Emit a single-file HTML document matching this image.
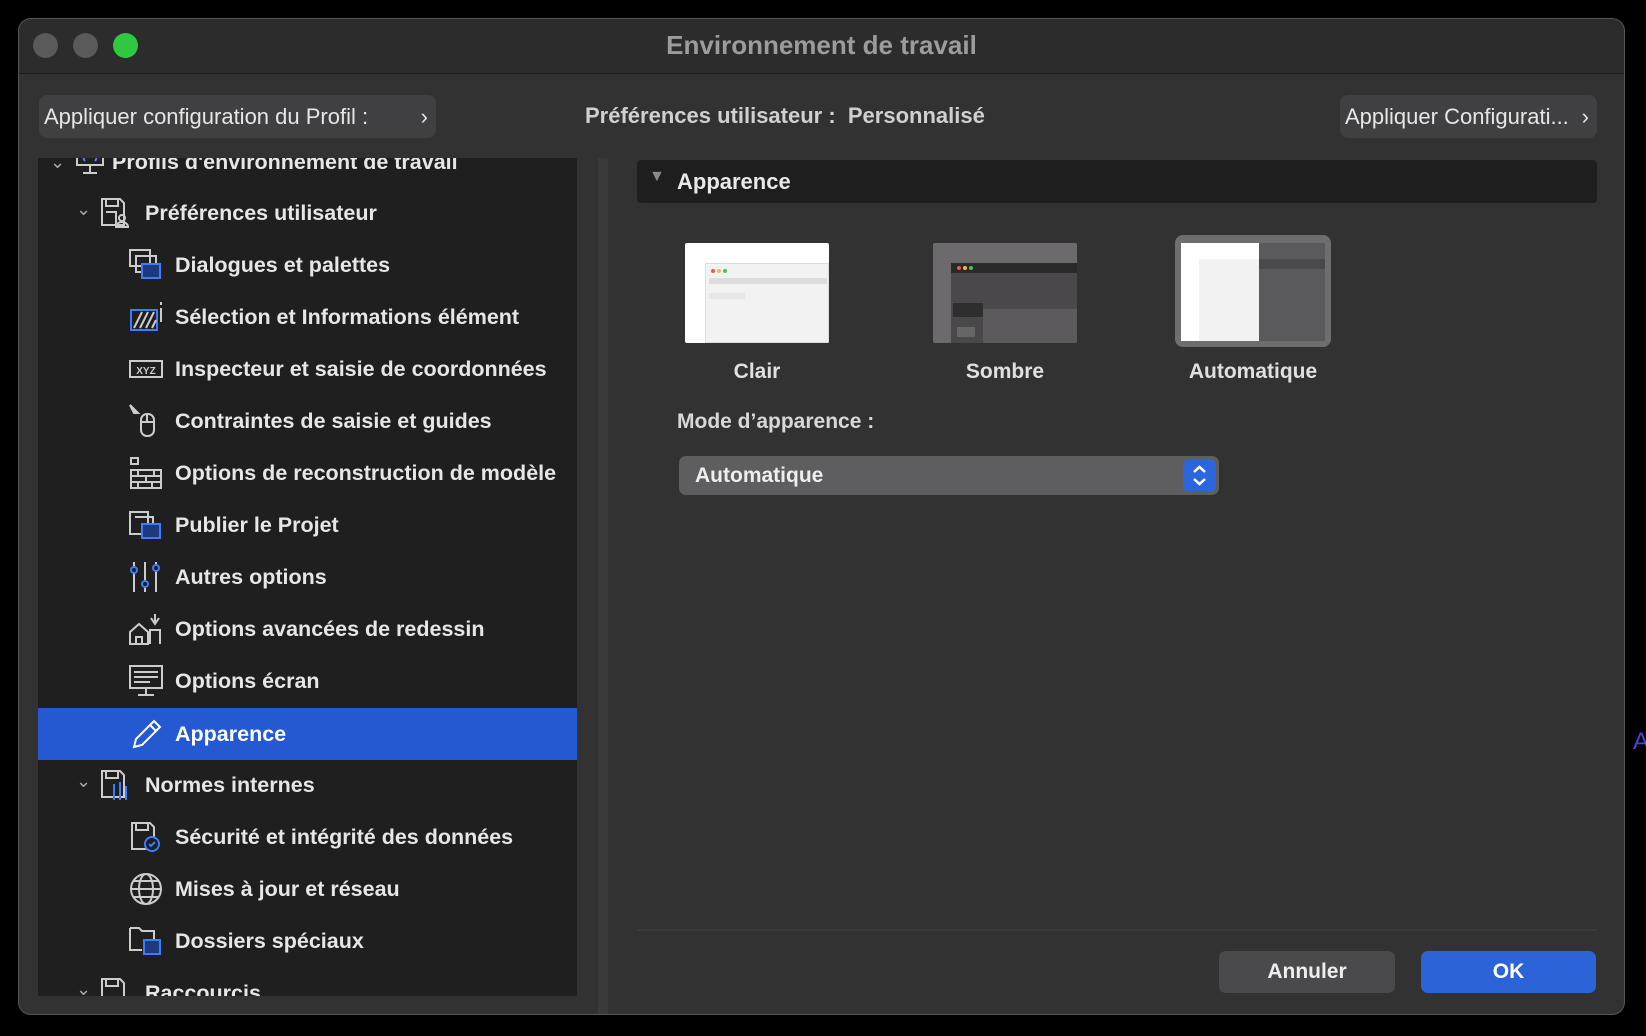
<!DOCTYPE html>
<html><head><meta charset="utf-8"><style>
*{margin:0;padding:0;box-sizing:border-box}
body{width:1646px;height:1036px;background:#000;overflow:hidden;font-family:"Liberation Sans",sans-serif;position:relative;color:#e4e4e4}
.win{position:absolute;left:18px;top:18px;width:1607px;height:997px;background:#323232;border-radius:13px;border:1px solid #555;overflow:hidden}
.tb{position:absolute;left:0;top:0;right:0;height:55px;background:#2c2c2c;border-bottom:1px solid #1a1a1a}
.l{position:absolute;top:14px;width:25px;height:25px;border-radius:50%;background:#5a5a5a}
.title{position:absolute;top:11px;left:0;right:0;text-align:center;font-size:26px;font-weight:bold;color:#9c9c9c}
.btn{position:absolute;background:#404042;border-radius:8px;font-size:22px;color:#e6e6e6;line-height:43px;padding-left:5px}
.abs{position:absolute}
.side{position:absolute;left:19px;top:139px;width:539px;height:838px;background:#1f1f1f;overflow:hidden}
.row{position:absolute;left:0;width:539px;height:52px;font-size:21.5px;font-weight:bold;line-height:52px;color:#e6e6e6;white-space:nowrap}
.row svg{position:absolute;top:9px}
.row .t{position:absolute}
.chev{position:absolute;font-size:18px;color:#aaa;font-weight:normal}
.sel{background:#2459d2}
.split{position:absolute;left:579px;top:139px;width:10px;height:858px;background:#3a3a3a}
.thumb{position:absolute;border-radius:2px;overflow:hidden}
.lab{position:absolute;font-size:21px;font-weight:bold;color:#e0e0e0;text-align:center;width:200px}
</style></head><body>
<div class="win">
 <div class="tb">
  <div class="l" style="left:14px"></div><div class="l" style="left:54px"></div><div class="l" style="left:94px;background:#2fc840"></div>
  <div class="title">Environnement de travail</div>
 </div>
 <div class="btn" style="left:20px;top:76px;width:397px;height:43px">Appliquer configuration du Profil :&nbsp;&nbsp;&nbsp;<span style="position:absolute;right:8px">›</span></div>
 <div class="abs" style="left:566px;top:84px;font-size:22px;font-weight:bold;color:#d0d0d0">Préférences utilisateur :&nbsp; Personnalisé</div>
 <div class="btn" style="left:1321px;top:76px;width:257px;height:43px">Appliquer Configurati... <span style="position:absolute;right:8px">›</span></div>

 <div class="side">
  <div class="row" style="top:-22px"><span class="chev" style="left:12px">⌄</span>
   <svg style="left:36px" width="32" height="32" viewBox="0 0 32 32" fill="none" stroke="#ccc" stroke-width="2"><rect x="3" y="4" width="26" height="16"/><path d="M16 20v8M9 28h14"/><path d="M11 8a6 6 0 0 0 0 8M21 8a6 6 0 0 1 0 8" stroke="#4a80ff"/></svg>
   <span class="t" style="left:74px">Profils d'environnement de travail</span></div>
  <div class="row" style="top:29px"><span class="chev" style="left:38px;top:-4px">⌄</span>
   <svg style="left:60px" width="34" height="34" viewBox="0 0 34 34" fill="none" stroke="#ccc" stroke-width="2"><path d="M4 3h18l4 4v22H4z"/><path d="M8 3v7h12V3M8 16h10v13"/><circle cx="24" cy="22" r="3"/><path d="M18 31a6 5 0 0 1 12 0z"/></svg>
   <span class="t" style="left:107px">Préférences utilisateur</span></div>
  <div class="row" style="top:81px"><svg style="left:90px" width="36" height="34" viewBox="0 0 36 34" fill="none" stroke="#ccc" stroke-width="2"><rect x="2" y="2" width="20" height="16"/><rect x="8" y="8" width="20" height="16"/><rect x="14" y="16" width="18" height="14" stroke="#3d7bff" fill="#1f3a7a"/></svg><span class="t" style="left:137px">Dialogues et palettes</span></div>
  <div class="row" style="top:133px"><svg style="left:90px" width="36" height="34" viewBox="0 0 36 34" fill="none" stroke="#ccc" stroke-width="2"><path d="M3 10h26v20H3z" stroke="#3d7bff"/><path d="M6 28l8-16M12 28l8-16M18 28l8-16M24 28l4-8"/><path d="M33 2v3M33 8v14"/></svg><span class="t" style="left:137px">Sélection et Informations élément</span></div>
  <div class="row" style="top:185px"><svg style="left:90px" width="36" height="34" viewBox="0 0 36 34" fill="none" stroke="#ccc" stroke-width="2"><rect x="2" y="9" width="32" height="16"/><text x="18" y="22" font-size="10" fill="#ccc" stroke="none" text-anchor="middle" font-family="Liberation Sans">XYZ</text></svg><span class="t" style="left:137px">Inspecteur et saisie de coordonnées</span></div>
  <div class="row" style="top:237px"><svg style="left:90px" width="36" height="34" viewBox="0 0 36 34" fill="none" stroke="#ccc" stroke-width="2"><path d="M2 1l8 8-4 0z" fill="#ccc"/><rect x="13" y="10" width="13" height="22" rx="6"/><path d="M19 10v8M13 18h13"/></svg><span class="t" style="left:137px">Contraintes de saisie et guides</span></div>
  <div class="row" style="top:289px"><svg style="left:90px" width="36" height="34" viewBox="0 0 36 34" fill="none" stroke="#ccc" stroke-width="2"><rect x="3" y="2" width="7" height="6"/><path d="M3 14h30v18H3zM3 20h30M3 26h30M10 14v6M18 20v6M26 14v6M10 26v6M24 26v6"/></svg><span class="t" style="left:137px">Options de reconstruction de modèle</span></div>
  <div class="row" style="top:341px"><svg style="left:90px" width="36" height="34" viewBox="0 0 36 34" fill="none" stroke="#ccc" stroke-width="2"><path d="M2 4h18v22H2z"/><path d="M7 9h18v18"/><rect x="14" y="16" width="18" height="14" stroke="#3d7bff" fill="#1f3a7a"/></svg><span class="t" style="left:137px">Publier le Projet</span></div>
  <div class="row" style="top:393px"><svg style="left:90px" width="36" height="34" viewBox="0 0 36 34" fill="none" stroke="#ccc" stroke-width="2"><path d="M6 2v30M17 2v30M28 2v30"/><circle cx="6" cy="10" r="3" fill="#1f1f1f" stroke="#3d7bff"/><circle cx="17" cy="24" r="3" fill="#1f1f1f" stroke="#3d7bff"/><circle cx="28" cy="8" r="3" fill="#1f1f1f" stroke="#3d7bff"/></svg><span class="t" style="left:137px">Autres options</span></div>
  <div class="row" style="top:445px"><svg style="left:90px" width="36" height="34" viewBox="0 0 36 34" fill="none" stroke="#ccc" stroke-width="2"><path d="M2 32V20l9-8 9 8v12zM8 32v-7h6v7M22 32V18h10v14M27 2v10M23 6l4 6 4-6"/></svg><span class="t" style="left:137px">Options avancées de redessin</span></div>
  <div class="row" style="top:497px"><svg style="left:90px" width="36" height="34" viewBox="0 0 36 34" fill="none" stroke="#ccc" stroke-width="2"><rect x="2" y="2" width="32" height="22"/><path d="M6 8h24M6 13h24M6 18h16M18 24v6M10 31h16"/></svg><span class="t" style="left:137px">Options écran</span></div>
  <div class="row sel" style="top:550px"><svg style="left:90px" width="36" height="34" viewBox="0 0 36 34" fill="none" stroke="#fff" stroke-width="2"><path d="M6 30l2-8L26 4l6 6-18 18z M22 8l6 6"/></svg><span class="t" style="left:137px;color:#fff">Apparence</span></div>
  <div class="row" style="top:601px"><span class="chev" style="left:38px;top:-4px">⌄</span>
   <svg style="left:60px" width="34" height="34" viewBox="0 0 34 34" fill="none" stroke="#ccc" stroke-width="2"><path d="M4 3h18l4 4v22H4z"/><path d="M8 3v7h12V3"/><path d="M16 16v16M22 14v18M28 18v14" stroke="#3d7bff"/></svg>
   <span class="t" style="left:107px">Normes internes</span></div>
  <div class="row" style="top:653px"><svg style="left:90px" width="36" height="34" viewBox="0 0 36 34" fill="none" stroke="#ccc" stroke-width="2"><path d="M4 3h18l4 4v22H4z"/><path d="M8 3v7h12V3"/><circle cx="24" cy="24" r="7" stroke="#3d7bff" fill="#1f1f1f"/><path d="M21 24l2 2 4-4" stroke="#3d7bff"/></svg><span class="t" style="left:137px">Sécurité et intégrité des données</span></div>
  <div class="row" style="top:705px"><svg style="left:90px" width="36" height="34" viewBox="0 0 36 34" fill="none" stroke="#ccc" stroke-width="2"><circle cx="18" cy="17" r="15"/><ellipse cx="18" cy="17" rx="7" ry="15"/><path d="M3 17h30M6 9h24M6 25h24"/></svg><span class="t" style="left:137px">Mises à jour et réseau</span></div>
  <div class="row" style="top:757px"><svg style="left:90px" width="36" height="34" viewBox="0 0 36 34" fill="none" stroke="#ccc" stroke-width="2"><path d="M2 4h9l3 3h12v10M2 4v22h12"/><rect x="16" y="16" width="16" height="14" stroke="#3d7bff" fill="#1f3a7a"/></svg><span class="t" style="left:137px">Dossiers spéciaux</span></div>
  <div class="row" style="top:809px"><span class="chev" style="left:38px;top:-4px">⌄</span>
   <svg style="left:60px" width="34" height="34" viewBox="0 0 34 34" fill="none" stroke="#ccc" stroke-width="2"><path d="M4 3h18l4 4v22H4z"/><path d="M8 3v7h12V3"/></svg>
   <span class="t" style="left:107px">Raccourcis</span></div>
 </div>
 <div class="split"></div>

 <div class="abs" style="left:618px;top:141px;width:960px;height:43px;background:#1e1e1e;border-radius:4px">
  <span class="abs" style="left:12px;top:8px;font-size:16px;color:#8a8a8a">▼</span>
  <span class="abs" style="left:40px;top:9px;font-size:22px;font-weight:bold;color:#e8e8e8">Apparence</span>
 </div>

 <div class="thumb" style="left:666px;top:224px;width:144px;height:100px;background:#fff">
  <div class="abs" style="left:20px;top:20px;width:124px;height:80px;background:#f2f2f2;border:1px solid #ddd"></div>
  <div class="abs" style="left:26px;top:26px;width:4px;height:4px;border-radius:50%;background:#e55"></div>
  <div class="abs" style="left:32px;top:26px;width:4px;height:4px;border-radius:50%;background:#eb4"></div>
  <div class="abs" style="left:38px;top:26px;width:4px;height:4px;border-radius:50%;background:#5b5"></div>
  <div class="abs" style="left:24px;top:35px;width:118px;height:6px;background:#ddd"></div>
  <div class="abs" style="left:24px;top:50px;width:36px;height:6px;background:#e6e6e6"></div>
 </div>
 <div class="thumb" style="left:914px;top:224px;width:144px;height:100px;background:#6c6a6d">
  <div class="abs" style="left:18px;top:20px;width:126px;height:80px;background:#4a484b"></div>
  <div class="abs" style="left:18px;top:20px;width:126px;height:10px;background:#2a2a2a"></div>
  <div class="abs" style="left:24px;top:23px;width:4px;height:4px;border-radius:50%;background:#e55"></div>
  <div class="abs" style="left:30px;top:23px;width:4px;height:4px;border-radius:50%;background:#eb4"></div>
  <div class="abs" style="left:36px;top:23px;width:4px;height:4px;border-radius:50%;background:#5b5"></div>
  <div class="abs" style="left:20px;top:60px;width:30px;height:14px;background:#2e2e2e"></div>
  <div class="abs" style="left:50px;top:66px;width:94px;height:34px;background:#5c5a5d"></div>
  <div class="abs" style="left:24px;top:84px;width:18px;height:10px;background:#666"></div>
 </div>
 <div class="thumb" style="left:1156px;top:216px;width:156px;height:112px;background:#6e6e70;border-radius:8px">
  <div class="abs" style="left:6px;top:8px;width:78px;height:98px;background:#fff"></div>
  <div class="abs" style="left:24px;top:24px;width:60px;height:82px;background:#f2f2f2"></div>
  <div class="abs" style="left:84px;top:8px;width:66px;height:98px;background:#5a5a5c"></div>
  <div class="abs" style="left:84px;top:24px;width:66px;height:10px;background:#4a4a4c"></div>
 </div>
 <div class="lab" style="left:638px;top:341px">Clair</div>
 <div class="lab" style="left:886px;top:341px">Sombre</div>
 <div class="lab" style="left:1134px;top:341px">Automatique</div>

 <div class="abs" style="left:658px;top:391px;font-size:21px;font-weight:bold;color:#d8d8d8">Mode d’apparence :</div>
 <div class="abs" style="left:660px;top:437px;width:540px;height:39px;background:#5e5e60;border-radius:7px">
  <span class="abs" style="left:16px;top:8px;font-size:21px;font-weight:bold;color:#eee">Automatique</span>
  <div class="abs" style="right:3px;top:3px;width:33px;height:33px;background:#2d66dc;border-radius:6px">
   <svg width="33" height="33" viewBox="0 0 33 33" fill="none" stroke="#fff" stroke-width="2.5"><path d="M11 13l5.5-5 5.5 5M11 20l5.5 5 5.5-5"/></svg>
  </div>
 </div>

 <div class="abs" style="left:618px;top:910px;width:960px;height:2px;background:#3c3c3c"></div>
 <div class="abs" style="left:1200px;top:932px;width:176px;height:42px;background:#4a4a4c;border-radius:7px;text-align:center;line-height:42px;font-size:21px;font-weight:bold;color:#eee">Annuler</div>
 <div class="abs" style="left:1402px;top:932px;width:175px;height:42px;background:#2d63d8;border-radius:7px;text-align:center;line-height:42px;font-size:21px;font-weight:bold;color:#fff">OK</div>
</div>
<div class="abs" style="left:1633px;top:728px;font-size:24px;color:#4a40d8">A</div>
</body></html>
